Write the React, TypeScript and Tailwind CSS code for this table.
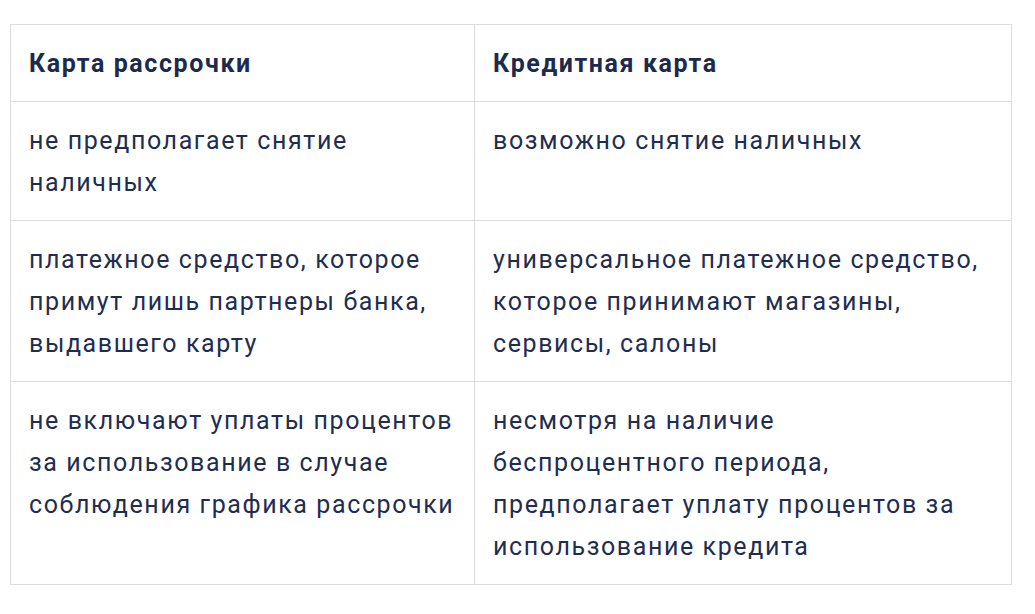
const rows: [string[], string[]][] = [
  [['не предполагает снятие', 'наличных'], ['возможно снятие наличных']],
  [
    ['платежное средство, которое', 'примут лишь партнеры банка,', 'выдавшего карту'],
    ['универсальное платежное средство,', 'которое принимают магазины,', 'сервисы, салоны'],
  ],
  [
    ['не включают уплаты процентов', 'за использование в случае', 'соблюдения графика рассрочки'],
    ['несмотря на наличие', 'беспроцентного периода,', 'предполагает уплату процентов за', 'использование кредита'],
  ],
]

function Lines({ lines }: { lines: string[] }) {
  return (
    <>
      {lines.map((l, i) => (
        <span key={i} className="block whitespace-nowrap">
          {l}
        </span>
      ))}
    </>
  )
}

export default function App() {
  const cell = 'border border-[#dddddd] px-[18px] pt-[18px] pb-[16px] text-left align-top text-[25px] leading-[42px] tracking-[1.6px]'
  return (
    <div className="min-h-screen bg-white pl-[10px] pt-[24px] font-['Roboto',sans-serif]">
      <table className="border-collapse w-[1001px] table-fixed">
        <colgroup>
          <col className="w-[464px]" />
          <col className="w-[537px]" />
        </colgroup>
        <thead>
          <tr>
            <th className={`${cell} font-bold text-[#1b2a4e]`}>Карта рассрочки</th>
            <th className={`${cell} font-bold text-[#1b2a4e]`}>Кредитная карта</th>
          </tr>
        </thead>
        <tbody>
          {rows.map(([left, right], i) => (
            <tr key={i}>
              <td className={`${cell} font-normal text-[#1e2d50]`}>
                <Lines lines={left} />
              </td>
              <td className={`${cell} font-normal text-[#1e2d50]`}>
                <Lines lines={right} />
              </td>
            </tr>
          ))}
        </tbody>
      </table>
    </div>
  )
}
